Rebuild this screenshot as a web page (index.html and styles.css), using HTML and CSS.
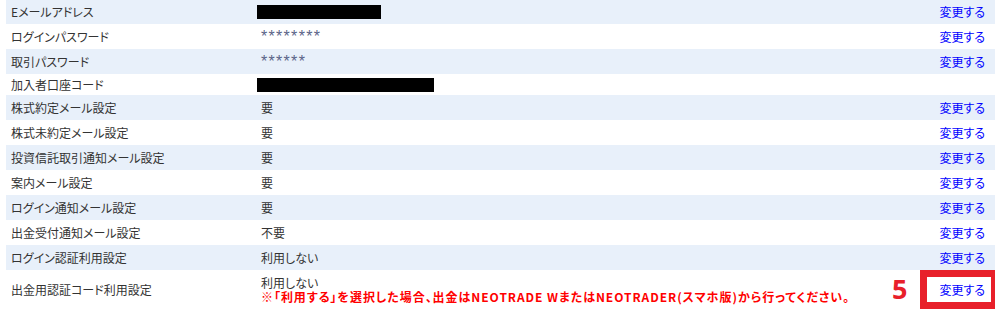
FILE: index.html
```html
<!DOCTYPE html>
<html lang="ja">
<head>
<meta charset="utf-8">
<title>お客様情報設定</title>
<link rel="stylesheet" href="styles.css">
</head>
<body>
<div class="settings">
  <div class="row alt h24">
    <div class="label">Eメールアドレス</div>
    <div class="value"><span class="redact r1"></span></div>
    <div class="action"><a href="#">変更する</a></div>
  </div>
  <div class="row">
    <div class="label">ログインパスワード</div>
    <div class="value"><span class="mask">********</span></div>
    <div class="action"><a href="#">変更する</a></div>
  </div>
  <div class="row alt">
    <div class="label">取引パスワード</div>
    <div class="value"><span class="mask">******</span></div>
    <div class="action"><a href="#">変更する</a></div>
  </div>
  <div class="row h21">
    <div class="label">加入者口座コード</div>
    <div class="value"><span class="redact r2"></span></div>
    <div class="action"></div>
  </div>
  <div class="row alt">
    <div class="label">株式約定メール設定</div>
    <div class="value">要</div>
    <div class="action"><a href="#">変更する</a></div>
  </div>
  <div class="row">
    <div class="label">株式未約定メール設定</div>
    <div class="value">要</div>
    <div class="action"><a href="#">変更する</a></div>
  </div>
  <div class="row alt">
    <div class="label">投資信託取引通知メール設定</div>
    <div class="value">要</div>
    <div class="action"><a href="#">変更する</a></div>
  </div>
  <div class="row">
    <div class="label">案内メール設定</div>
    <div class="value">要</div>
    <div class="action"><a href="#">変更する</a></div>
  </div>
  <div class="row alt">
    <div class="label">ログイン通知メール設定</div>
    <div class="value">要</div>
    <div class="action"><a href="#">変更する</a></div>
  </div>
  <div class="row">
    <div class="label">出金受付通知メール設定</div>
    <div class="value">不要</div>
    <div class="action"><a href="#">変更する</a></div>
  </div>
  <div class="row alt">
    <div class="label">ログイン認証利用設定</div>
    <div class="value">利用しない</div>
    <div class="action"><a href="#">変更する</a></div>
  </div>
  <div class="row last">
    <div class="label">出金用認証コード利用設定</div>
    <div class="value">
      <div class="line">利用しない</div>
      <div class="line note">※「利用する」を選択した場合、出金はNEOTRADE WまたはNEOTRADER(スマホ版)から行ってください。</div>
    </div>
    <div class="action"><a href="#">変更する</a></div>
    <span class="step">5</span>
    <span class="highlight"></span>
  </div>
</div>
</body>
</html>
```

FILE: styles.css
```css
html, body {
  margin: 0;
  padding: 0;
  background: #ffffff;
}

body {
  font-family: "Noto Sans CJK JP", "Liberation Sans", sans-serif;
  font-size: 12px;
  color: #333333;
  font-feature-settings: "palt";
  overflow: hidden;
}

.settings {
  padding-left: 6px;
  width: 995px;
  box-sizing: border-box;
}

.row {
  display: grid;
  grid-template-columns: 245px 1fr 120px;
  align-items: center;
  height: 25px;
  line-height: 14px;
  background: #ffffff;
}

.row.alt {
  background: #e8f0fa;
}

.row.h24 { height: 24px; }
.row.h21 { height: 21px; }

.row.last {
  height: 39px;
  position: relative;
}

.label {
  padding-left: 5px;
  white-space: nowrap;
}

.value {
  padding-left: 10px;
  white-space: nowrap;
}

.line {
  height: 14px;
  line-height: 14px;
}

.action {
  text-align: right;
  padding-right: 10px;
}

.action a {
  color: #0000ff;
  text-decoration: none;
}

.redact {
  display: block;
  background: #000000;
  height: 14px;
  margin-left: -4px;
}

.redact.r1 { width: 124px; }
.redact.r2 { width: 177px; }

.mask {
  display: inline-block;
  color: #5a6488;
  letter-spacing: 1.3px;
  font-family: "Liberation Sans", sans-serif;
  font-size: 16px;
  line-height: 14px;
  height: 14px;
  vertical-align: top;
  margin-top: 1px;
}

.note {
  color: #ff0000;
  font-weight: bold;
  letter-spacing: 0.95px;
}

.step {
  position: absolute;
  left: 886px;
  top: 1px;
  font-family: "Noto Sans", "Liberation Sans", sans-serif;
  font-weight: bold;
  font-size: 27px;
  line-height: 36px;
  color: #e8202a;
}

.highlight {
  position: absolute;
  left: 914px;
  top: 0;
  width: 78px;
  height: 39px;
  border: 7px solid #e8202a;
  box-sizing: border-box;
}
```
